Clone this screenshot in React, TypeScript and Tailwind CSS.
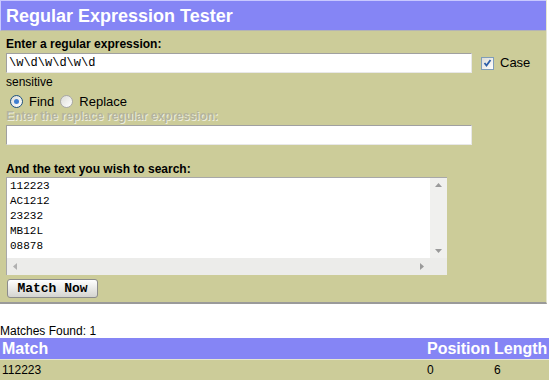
export default function App() {
  const lines = ["112223", "AC1212", "23232", "MB12L", "08878"];

  return (
    <div className="w-[549px] h-[382px] overflow-hidden bg-white font-['Liberation_Sans',Arial,sans-serif] text-black">
      <div className="w-[547px] border-r border-b-2 border-r-[#e6e6d0] border-b-[#9a9a9a]">
        {/* title bar */}
        <div className="h-[31px] bg-[#8585f5] border-t border-l border-[#c8c8ff] border-b border-b-[#b4b4b4] pl-[5px] flex items-center">
          <h1 className="text-[18px] font-bold text-white leading-none">Regular Expression Tester</h1>
        </div>

        {/* form panel */}
        <div className="bg-[#cccc99] px-[6px] pt-[6px] pb-[4px] h-[271px]">
          <p className="text-[12px] font-bold leading-[14px]">Enter a regular expression:</p>
          <div className="flex items-center mt-[2px] h-[20px]">
            <div className="w-[466px] h-[20px] bg-white border-t border-l border-[#a0a0a0] border-r border-b border-r-[#e8e8e8] border-b-[#e8e8e8] flex items-center pl-[2px] font-['Liberation_Mono',monospace] text-[12px]">
              \w\d\w\d\w\d
            </div>
            <span className="ml-[9px] w-[13px] h-[13px] border border-[#7f9db9] bg-gradient-to-br from-[#dcdcd7] to-white flex items-center justify-center">
              <svg width="9" height="9" viewBox="0 0 9 9">
                <path d="M1.5 4 L3.5 6.5 L7.5 1" fill="none" stroke="#2d5ea8" strokeWidth="1.8" />
              </svg>
            </span>
            <span className="ml-[6px] text-[13px]">Case</span>
          </div>
          <p className="text-[12px] leading-[14px] mt-[2px]">sensitive</p>

          <div className="flex items-center h-[15px] mt-[5px] text-[13px]">
            <span className="ml-[4px] w-[13px] h-[13px] rounded-full border border-[#1c5180] bg-gradient-to-br from-[#dcdcd7] to-white flex items-center justify-center">
              <span className="w-[5px] h-[5px] rounded-full bg-[#3f7fd0]" />
            </span>
            <span className="ml-[6px]">Find</span>
            <span className="ml-[6px] w-[13px] h-[13px] rounded-full border border-[#a8a8a8] bg-gradient-to-br from-[#dcdcd7] to-white" />
            <span className="ml-[6px]">Replace</span>
          </div>

          <p className="text-[12px] font-bold leading-[14px] text-[#b4b49c] [text-shadow:1px_1px_0_#ececdc]">
            Enter the replace regular expression:
          </p>
          <div className="mt-[2px] w-[466px] h-[20px] bg-white border-t border-l border-[#a0a0a0] border-r border-b border-r-[#e8e8e8] border-b-[#e8e8e8]" />

          <p className="text-[12px] font-bold leading-[14px] mt-[17px]">And the text you wish to search:</p>

          {/* textarea with scrollbars */}
          <div className="mt-[1px] w-[441px] h-[98px] border-t border-l border-[#a8a8a8] bg-white grid grid-cols-[1fr_17px] grid-rows-[1fr_17px]">
            <div className="pl-[3px] pt-[1px] font-['Liberation_Mono',monospace] text-[11px] leading-[15px]">
              {lines.map((l) => (
                <div key={l}>{l}</div>
              ))}
            </div>
            <div className="bg-[#f0f0ee] flex flex-col items-center justify-between py-[5px]">
              <svg width="7" height="4" viewBox="0 0 7 4">
                <path d="M0 4 L3.5 0 L7 4 Z" fill="#9a9a9a" />
              </svg>
              <svg width="7" height="4" viewBox="0 0 7 4">
                <path d="M0 0 L3.5 4 L7 0 Z" fill="#9a9a9a" />
              </svg>
            </div>
            <div className="bg-[#ececea] flex items-center justify-between px-[6px]">
              <svg width="4" height="7" viewBox="0 0 4 7">
                <path d="M4 0 L0 3.5 L4 7 Z" fill="#b0b0b0" />
              </svg>
              <svg width="4" height="7" viewBox="0 0 4 7">
                <path d="M0 0 L4 3.5 L0 7 Z" fill="#9a9a9a" />
              </svg>
            </div>
            <div className="bg-[#ececea]" />
          </div>

          <button className="mt-[3px] ml-[1px] w-[91px] h-[19px] rounded-[3px] border border-[#8c8c8c] bg-gradient-to-b from-white to-[#d4d4d0] font-['Liberation_Mono',monospace] font-bold text-[13px] leading-none">
            Match Now
          </button>
        </div>
      </div>

      <p className="mt-[20px] text-[12px] leading-[14px]">Matches Found: 1</p>

      <table className="w-full border-collapse">
        <thead>
          <tr className="bg-[#8585f5] text-white text-[16px] font-bold h-[21px]">
            <th className="text-left pl-[2px] leading-[21px]">Match</th>
            <th className="text-left w-[67px] leading-[21px]">Position</th>
            <th className="text-left w-[55px] leading-[21px]">Length</th>
          </tr>
        </thead>
        <tbody>
          <tr className="bg-[#cccc99] text-[12px] h-[20px] border-t border-[#e6e6d0]">
            <td className="pl-[2px]">112223</td>
            <td>0</td>
            <td>6</td>
          </tr>
        </tbody>
      </table>
    </div>
  );
}
